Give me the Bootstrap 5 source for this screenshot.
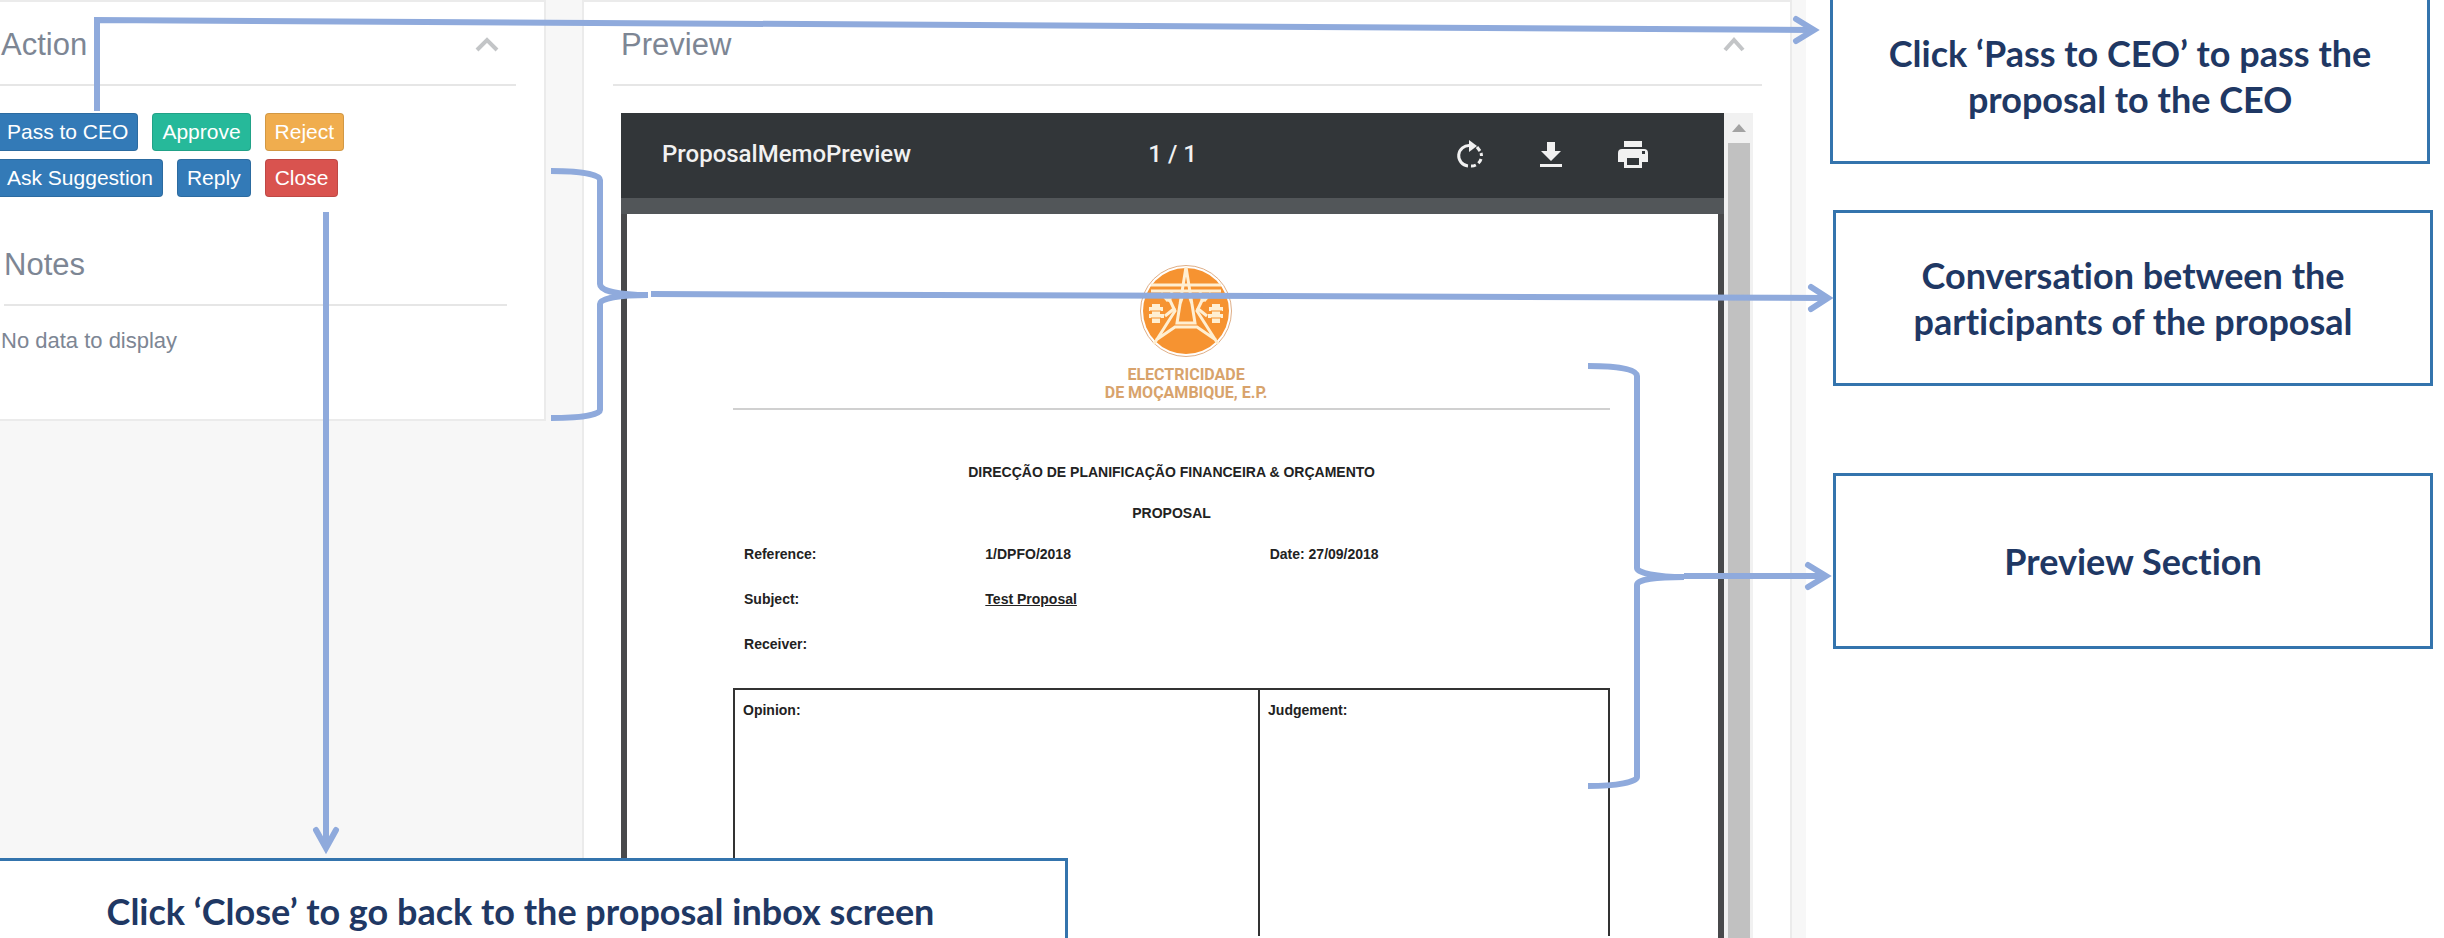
<!DOCTYPE html>
<html lang="en">
<head>
<meta charset="utf-8">
<meta name="viewport" content="width=device-width, initial-scale=1">
<title>Proposal actions and preview</title>
<link href="https://cdn.jsdelivr.net/npm/bootstrap@5.3.0/dist/css/bootstrap.min.css" rel="stylesheet">
<style>
  body { font-family: "Liberation Sans", Arial, sans-serif; background: #fff; color: #7d8694; }
  .stage { min-height: 100vh; overflow: hidden; }
  .workspace { flex: 0 0 73.9%; display: grid; grid-template-columns: 546fr 1210fr; column-gap: 36px; padding-right: 14px; background: #f7f7f7; align-items: start; }
  .panel { background: #fff; border: 2px solid #ebebeb; border-radius: 0; padding: 25px 28px 0 29px; }
  .panel-action { margin-left: -34px; height: 421px; }
  .panel-preview { align-self: stretch; border-bottom: 0; }
  .panel-head { border-bottom: 2px solid #e6e6e6; padding-bottom: 21px; margin-bottom: 27px; }
  .panel-head h2 { font-size: 31px; line-height: 36px; font-weight: 400; margin: 0; }
  .panel-head button { border: 0; background: none; padding: 0 16px; line-height: 0; }
  .inset { padding-left: 4px; }
  .notes-head { margin: 50px 9px 20px 7px; }
  .btn-line { gap: 14px; }
  .tag-btn { font-size: 21px; line-height: 36px; padding: 0 9px; border-radius: 4px; color: #fff; border: 1px solid rgba(0,0,0,.12); }
  .tag-blue { background: #337ab7; } .tag-green { background: #26b99a; }
  .tag-amber { background: #f0ad4e; } .tag-red { background: #d9534f; }
  .tag-btn:hover { color: #fff; filter: brightness(.92); }
  .empty-note { font-size: 22px; line-height: 30px; margin: 0; }

  .viewer { margin: 0 9px 0 8px; }
  .viewer-main { background: #48494b; }
  .viewer-bar { background: #323639; color: #f1f1f1; height: 85px; padding: 0 41px 4px; font: 500 24px/28px Roboto, sans-serif; display: grid; grid-template-columns: 1fr auto 1fr; align-items: center; }
  .viewer-tools { margin-right: 33px; }
  .viewer-bar button { border: 0; background: none; padding: 0; line-height: 0; }
  .viewer-gap { height: 16px; background: #525659; }
  .viewer-scroll { width: 29px; background: #f1f1f1; }
  .viewer-scroll .thumb { width: 22px; background: #c1c1c1; }
  .viewer-scroll .cap { height: 30px; }

  .sheet { background: #fff; margin: 0 6px; padding: 50px 108px 0 106px; color: #222; font: 700 14px/24px "Liberation Sans", sans-serif; }
  .brand { padding-left: 29px; color: #d8a36c; font: 700 16px/18px Roboto, sans-serif; }
  .sheet-rule { border-bottom: 2px solid #d0d0d0; padding-bottom: 6px; }
  .sheet h3, .sheet h4 { font: inherit; margin: 0; }
  .sheet h3 { padding: 50px 0 17px; }
  .fields { display: grid; grid-template-columns: 241fr 284fr 340fr; row-gap: 21px; margin: 17px 0 32px; padding-left: 11px; }
  .verdict { width: 100%; border-collapse: collapse; }
  .verdict th { border: 2px solid #333; border-bottom: 0; height: 247px; vertical-align: top; padding: 8px 8px 0; font-weight: inherit; }
  .verdict th:first-child { width: 60%; }

  .callouts { padding: 0 11px 0 27px; }
  .callout-box { border: 3px solid #3474ad; background: #fff; color: #1f3864; font: 700 36px/46px Lato, sans-serif; font-variant-ligatures: none; text-align: center; display: flex; align-items: center; justify-content: center; }
  .callouts .callout-box { height: 176px; }
  .callouts .callout-top { height: 164px; border-top: 0; margin: 0 3px 46px -3px; padding-bottom: 10px; }
  .callout-mid { margin-bottom: 87px; }
  .callout-close { left: 0; bottom: 0; width: 43.7%; height: 80px; border-left: 0; border-bottom: 0; padding: 23px 24px 0 0; }
  .connectors { left: 0; top: 0; width: 100%; height: 938px; pointer-events: none; fill: none; stroke: #8faadc; stroke-width: 6; }
</style>
</head>
<body>
<div class="stage position-relative d-flex">
  <main class="workspace">
    <section class="panel panel-action">
      <div class="panel-head d-flex justify-content-between align-items-center">
        <h2 class="inset">Action</h2>
        <button type="button" aria-label="Collapse action panel"><svg width="26" height="20" viewBox="0 0 26 20"><path d="M3 15 13 5 23 15" fill="none" stroke="#c3c5c7" stroke-width="4"/></svg></button>
      </div>
      <div class="d-flex flex-column gap-2">
        <div class="btn-line d-flex">
          <button type="button" class="btn tag-btn tag-blue">Pass to CEO</button>
          <button type="button" class="btn tag-btn tag-green">Approve</button>
          <button type="button" class="btn tag-btn tag-amber">Reject</button>
        </div>
        <div class="btn-line d-flex">
          <button type="button" class="btn tag-btn tag-blue">Ask Suggestion</button>
          <button type="button" class="btn tag-btn tag-blue">Reply</button>
          <button type="button" class="btn tag-btn tag-red">Close</button>
        </div>
      </div>
      <div class="panel-head notes-head"><h2>Notes</h2></div>
      <p class="empty-note inset">No data to display</p>
    </section>

    <section class="panel panel-preview d-flex flex-column">
      <div class="panel-head d-flex justify-content-between align-items-center">
        <h2 class="ps-2">Preview</h2>
        <button type="button" aria-label="Collapse preview panel"><svg width="24" height="20" viewBox="0 0 24 20"><path d="M3 15 12 5 21 15" fill="none" stroke="#c3c5c7" stroke-width="4"/></svg></button>
      </div>
      <div class="viewer d-flex flex-grow-1">
        <div class="viewer-main flex-grow-1 d-flex flex-column">
          <div class="viewer-bar">
            <span>ProposalMemoPreview</span>
            <span>1 / 1</span>
            <div class="viewer-tools d-flex justify-content-end align-items-center gap-5">
              <button type="button" aria-label="Rotate"><svg width="32" height="32" viewBox="0 0 32 32"><g fill="none" stroke="#f1f1f1" stroke-width="3"><path d="M16 7.500A10 10 0 0 0 14 28"/><path d="M17 28A10 10 0 0 0 27 15" stroke-dasharray="5 3"/><path d="M26 13 23 9"/></g><path d="M15 2 23 8 15 14Z" fill="#f1f1f1"/></svg></button>
              <button type="button" aria-label="Download"><svg width="34" height="32" viewBox="0 0 34 32"><path d="M13 4H21V13H27L17 23 7 13H13ZM6 26H28V29H6Z" fill="#f1f1f1"/></svg></button>
              <button type="button" aria-label="Print"><svg width="34" height="32" viewBox="0 0 34 32"><path fill="#f1f1f1" fill-rule="evenodd" d="M8 3H26V9H8ZM6 11H28Q32 11 32 15V24H26V30H8V24H2V15Q2 11 6 11ZM11 20V27H23V20ZM26 13V16H29V13Z"/></svg></button>
            </div>
          </div>
          <div class="viewer-gap"></div>
          <article class="sheet flex-grow-1">
            <div class="sheet-rule">
              <div class="brand text-center">
                <svg class="d-block mx-auto mb-2" width="94" height="94" viewBox="0 0 94 94" role="img" aria-label="Electricidade de Moçambique">
                  <circle cx="47" cy="47" r="45.500" fill="#fff" stroke="#dfae86"/>
                  <circle cx="47" cy="47" r="43" fill="#f69331"/>
                  <g fill="none" stroke="#ffefd2" stroke-width="3">
                    <path d="M12 21H82M12 27H82M47 3 38 59H56L47 3M43 34 41 40M51 34 53 40"/>
                    <path d="M28 30 36 47 15 80M66 30 58 47 79 80M17 76 36 63H58L77 76"/>
                    <path d="M22 29 29 37M33 28 30 38M72 29 65 37M61 28 64 38M36 44 26 52M58 44 68 52"/>
                  </g>
                  <path d="M13 40H21V43H24V47H21V50H25V54H21V59H13V54H10V50H13V47H10V43H13ZM73 40H81V43H84V47H81V50H84V54H81V59H73V54H69V50H73V47H70V43H73Z" fill="#ffefd2"/>
                  <path d="M11 47H22M72 47H83M12 54H22M72 54H82" stroke="#f69331"/>
                </svg>
                <div>ELECTRICIDADE</div>
                <div>DE MOÇAMBIQUE, E.P.</div>
              </div>
            </div>
            <h3 class="text-center">DIRECÇÃO DE PLANIFICAÇÃO FINANCEIRA &amp; ORÇAMENTO</h3>
            <h4 class="text-center">PROPOSAL</h4>
            <div class="fields">
              <span>Reference:</span><span>1/DPFO/2018</span><span>Date: 27/09/2018</span>
              <span>Subject:</span><span><u>Test Proposal</u></span><span></span>
              <span>Receiver:</span><span></span><span></span>
            </div>
            <table class="verdict"><tbody><tr><th scope="col">Opinion:</th><th scope="col">Judgement:</th></tr></tbody></table>
          </article>
        </div>
        <div class="viewer-scroll d-flex flex-column align-items-center">
          <div class="cap d-flex align-items-center"><svg width="14" height="8" viewBox="0 0 14 8"><path d="M7 0 14 8H0Z" fill="#a3a3a3"/></svg></div>
          <div class="thumb flex-grow-1"></div>
        </div>
      </div>
    </section>
  </main>

  <aside class="callouts flex-grow-1">
    <div class="callout-box callout-top">Click ‘Pass to CEO’ to pass the<br>proposal to the CEO</div>
    <div class="callout-box callout-mid">Conversation between the<br>participants of the proposal</div>
    <div class="callout-box">Preview Section</div>
  </aside>

  <div class="callout-box callout-close position-absolute">Click ‘Close’ to go back to the proposal inbox screen</div>

  <svg class="connectors position-absolute" viewBox="0 0 2444 938" preserveAspectRatio="none" aria-hidden="true">
    <path d="M97 111V20L1814 30"/>
    <path d="M1796 19 1814 30 1796 41M1811 287 1828 298 1811 309M1808 565 1826 576 1808 587M316 830 326 848 336 830" stroke-linecap="round"/>
    <path d="M651 294 1828 298M326 212V848M1684 576H1826"/>
    <path d="M551 171C580 171 600 174 600 180V284C600 291 620 295 648 295C620 295 600 298 600 304V410C600 415 580 418 551 418"/>
    <path d="M1588 366C1617 366 1637 369 1637 376V568C1637 573 1657 577 1684 577C1657 577 1637 579 1637 585V777C1637 782 1617 786 1588 786"/>
  </svg>
</div>
<script src="https://cdn.jsdelivr.net/npm/bootstrap@5.3.0/dist/js/bootstrap.bundle.min.js"></script>
</body>
</html>
